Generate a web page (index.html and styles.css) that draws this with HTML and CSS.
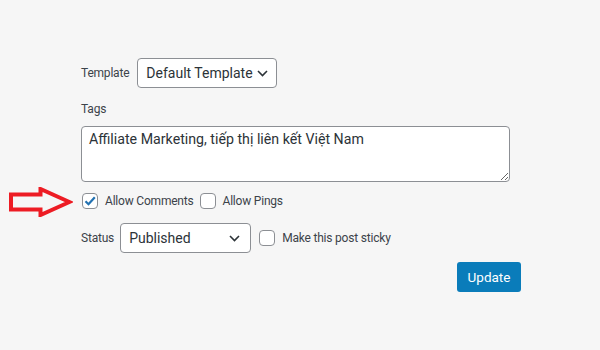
FILE: index.html
```html
<!DOCTYPE html>
<html lang="vi">
<head>
  <meta charset="UTF-8" />
  <meta name="viewport" content="width=device-width, initial-scale=1.0"/>
  <title>Post Attributes</title>
  <link rel="stylesheet" href="styles.css">
</head>
<body>
  <div class="panel">
    <div class="row template-row">
      <label class="label">Template</label>
      <div class="select select-template">
        <span>Default Template</span>
        <svg class="chevron" width="11" height="7" viewBox="0 0 11 7"><path d="M1 1l4.5 4.5L10 1" fill="none" stroke="#2c3338" stroke-width="1.6"/></svg>
      </div>
    </div>

    <div class="label tags-label">Tags</div>
    <textarea class="tags">Affiliate Marketing, tiếp thị liên kết Việt Nam</textarea>

    <div class="row check-row">
      <!-- annotation arrow -->
      <svg class="arrow" width="64" height="30" viewBox="0 0 64 30">
        <path d="M2 7.5h29.5v-5.5l29 13l-29 13v-5.5h-29.5z" fill="none" stroke="#ed1c24" stroke-width="4" stroke-linejoin="miter"/>
      </svg>
      <span class="checkbox checked">
        <svg width="14" height="14" viewBox="0 0 14 14"><path d="M2.5 7.2l3 3L11.8 3.2" fill="none" stroke="#2271b1" stroke-width="2.2"/></svg>
      </span>
      <span class="check-text">Allow Comments</span>
      <span class="checkbox"></span>
      <span class="check-text">Allow Pings</span>
    </div>

    <div class="row status-row">
      <label class="label">Status</label>
      <div class="select select-status">
        <span>Published</span>
        <svg class="chevron" width="11" height="7" viewBox="0 0 11 7"><path d="M1 1l4.5 4.5L10 1" fill="none" stroke="#2c3338" stroke-width="1.6"/></svg>
      </div>
      <span class="checkbox"></span>
      <span class="check-text">Make this post sticky</span>
    </div>

    <div class="actions">
      <button class="btn-update">Update</button>
    </div>
  </div>
</body>
</html>
```

FILE: styles.css
```css
* {
  margin: 0;
  padding: 0;
  box-sizing: border-box;
}

body {
  font-family: Roboto, 'Open Sans', sans-serif;
  background-color: #f6f6f6;
  color: #3c434a;
}

.panel {
  width: 440px;
  padding-top: 58px;
  margin-left: 81px;
}

.row {
  display: flex;
  align-items: center;
}

.label {
  font-size: 12px;
  letter-spacing: -0.2px;
  color: #3c434a;
}

.template-row .label {
  margin-right: 8px;
}

.select {
  height: 30px;
  background: #fff;
  border: 1px solid #8c8f94;
  border-radius: 4px;
  display: flex;
  align-items: center;
  justify-content: space-between;
  padding: 0 8px 0 8px;
  font-size: 14px;
  color: #2c3338;
  white-space: nowrap;
}

.select-template {
  width: 140px;
}

.select-status {
  width: 131px;
  padding-right: 10px;
}

.tags-label {
  margin-top: 12px;
  line-height: 18px;
}

.tags {
  display: block;
  width: 429px;
  height: 56px;
  margin-top: 8px;
  padding: 4px 7px;
  font-family: inherit;
  font-size: 14.2px;
  color: #2c3338;
  border: 1px solid #8c8f94;
  border-radius: 4px;
  background: #fff;
}

.check-row {
  position: relative;
  margin-top: 10px;
  height: 18px;
}

.arrow {
  position: absolute;
  left: -72px;
  top: -5px;
}

.checkbox {
  width: 16px;
  height: 16px;
  border: 1px solid #8c8f94;
  border-radius: 4px;
  background: #fff;
  display: flex;
  align-items: center;
  justify-content: center;
  flex-shrink: 0;
}

.check-text {
  font-size: 12px;
  letter-spacing: -0.2px;
  margin-left: 7px;
  margin-right: 6px;
}

.check-row .checkbox:first-of-type {
  margin-left: 1px;
}

.status-row {
  margin-top: 13px;
}

.status-row .label {
  margin-right: 6px;
}

.status-row .checkbox {
  margin-left: 8px;
}

.actions {
  display: flex;
  justify-content: flex-end;
  margin-top: 9px;
}

.btn-update {
  width: 64px;
  height: 30px;
  background-color: #0a7cba;
  color: #fff;
  border: none;
  border-radius: 3px;
  font-family: inherit;
  font-size: 13.5px;
  cursor: pointer;
}
```
